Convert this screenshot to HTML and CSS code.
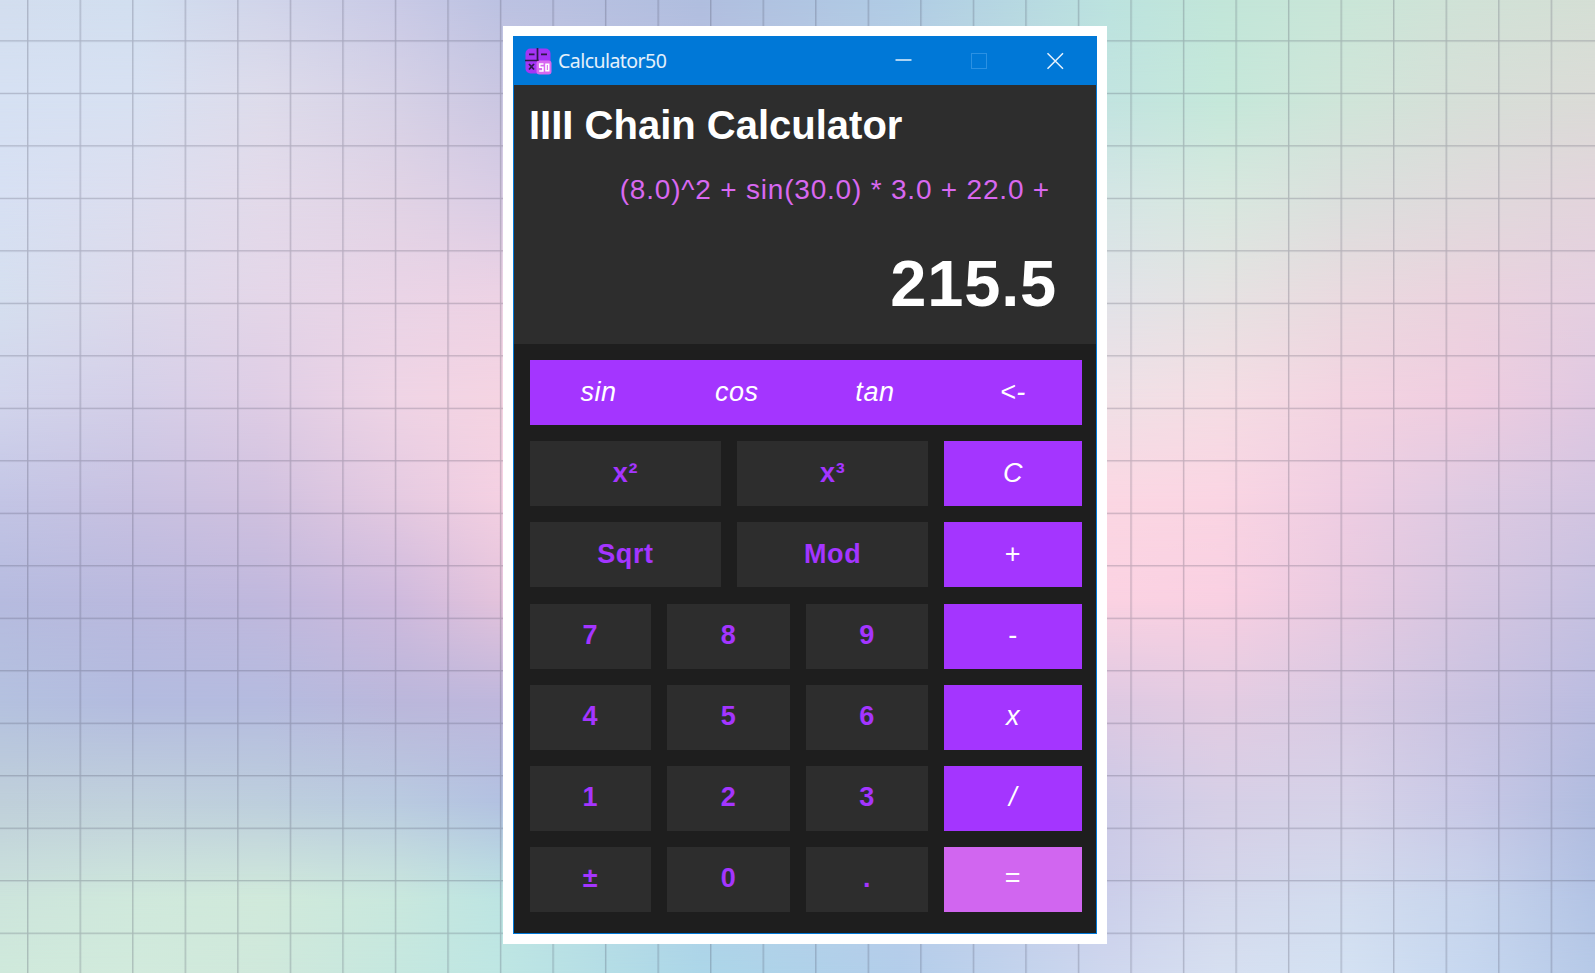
FILE: index.html
```
<!DOCTYPE html>
<html lang="en">
<head>
<meta charset="utf-8">
<title>Calculator50</title>
<link rel="stylesheet" href="styles.css">
</head>
<body>
<div class="backdrop" aria-hidden="true">
  <div class="wash wash-0"></div>
  <div class="wash wash-1"></div>
  <div class="wash wash-2"></div>
  <div class="wash wash-3"></div>
  <div class="wash wash-4"></div>
  <div class="wash wash-5"></div>
  <div class="wash wash-6"></div>
  <div class="wash wash-7"></div>
  <div class="wash wash-8"></div>
  <div class="wash wash-9"></div>
  <div class="wash wash-10"></div>
  <svg class="lines" width="1595" height="973">
    <defs>
      <pattern id="cell" x="27" y="40.3" width="52.54" height="52.49" patternUnits="userSpaceOnUse">
        <path d="M.75 0V52.49M0 .65H52.54" fill="none" stroke="#3c3c50" stroke-opacity=".27" stroke-width="1.3"/>
      </pattern>
    </defs>
    <rect width="1595" height="973" fill="url(#cell)"/>
  </svg>
</div>
<main class="frame">
  <section class="window">
    <header class="titlebar">
      <svg class="app-icon" width="27" height="27" viewBox="0 0 27 27">
        <rect x=".5" y=".5" width="25" height="25" rx="5" fill="#a435f5"/>
        <path d="M12.5 0V12.5M0 12.5H14M4 6.3H9.5M16 6.3H22" stroke="#2c1748" stroke-width="1.7" fill="none"/>
        <path d="M4 16L9 21.500M9 16L4 21.500" stroke="#2c1748" stroke-width="1.8"/>
        <rect x="11.500" y="12.500" width="15" height="14" rx="3" fill="#d868f0"/>
        <path d="M18.500 16H14.700V19.200H17.900V23H14.200M21 16.200H23.700V22.800H21Z" stroke="#fff" stroke-width="1.6" fill="none"/>
      </svg>
      <span class="app-name">Calculator50</span>
      <svg class="controls" width="170" height="18" viewBox="0 0 170 18">
        <path d="M.5 8H16.500" stroke="#e6f2fc" stroke-width="1.5"/>
        <rect x="76.500" y="1.500" width="15" height="15" fill="none" stroke="#2b91e3"/>
        <path d="M152.500 1.200L168 16.800M168 1.200L152.500 16.800" stroke="#e6f2fc" stroke-width="1.5"/>
      </svg>
    </header>
    <div class="display">
      <h1 class="heading">IIII Chain Calculator</h1>
      <div class="expression">(8.0)^2 + sin(30.0) * 3.0 + 22.0 +</div>
      <div class="result">215.5</div>
    </div>
    <div class="keypad">
      <div class="row row-trig">
        <button class="op">sin</button><button class="op">cos</button><button class="op">tan</button><button class="op">&lt;-</button>
      </div>
      <div class="row row-wide">
        <button class="key">x²</button><button class="key">x³</button><button class="op">C</button>
      </div>
      <div class="row row-wide">
        <button class="key">Sqrt</button><button class="key">Mod</button><button class="op upright">+</button>
      </div>
      <div class="row row-num">
        <button class="key">7</button><button class="key">8</button><button class="key">9</button><button class="op upright">-</button>
      </div>
      <div class="row row-num">
        <button class="key">4</button><button class="key">5</button><button class="key">6</button><button class="op">x</button>
      </div>
      <div class="row row-num">
        <button class="key">1</button><button class="key">2</button><button class="key">3</button><button class="op">/</button>
      </div>
      <div class="row row-num">
        <button class="key">±</button><button class="key">0</button><button class="key">.</button><button class="op upright equals">=</button>
      </div>
    </div>
  </section>
</main>
</body>
</html>
```
FILE: styles.css
```
* { box-sizing: border-box; }

body {
  margin: 0;
  width: 1595px;
  height: 973px;
  overflow: hidden;
  display: flex;
  justify-content: center;
  align-items: flex-start;
  padding: 26px 0 0 15px;
  font-family: "Liberation Sans", Arial, sans-serif;
}

/* Pastel mesh: each wash fades in over the one above it. */
.backdrop { position: absolute; inset: 0; overflow: hidden; z-index: -1; }
.wash {
  position: absolute;
  left: 0; right: 0; bottom: 0;
  --stops: 0px;
  background: linear-gradient(to right, var(--c0) 0, var(--c1) 133px, var(--c2) 265px, var(--c3) 400px, var(--c4) 500px, var(--c5) 700px, var(--c6) 900px, var(--c7) 1110px, var(--c8) 1220px, var(--c9) 1350px, var(--c10) 1470px, var(--c11) 1595px);
  -webkit-mask-image: linear-gradient(to bottom, transparent 0, #000 100px);
  mask-image: linear-gradient(to bottom, transparent 0, #000 100px);
}
.wash-0 { top: 0; -webkit-mask-image: none; mask-image: none;
  --c0:#d3deef; --c1:#d2dff0; --c2:#d1d5ea; --c3:#c9cae6; --c4:#bcc2e2; --c5:#b0bedf; --c6:#b0cce5; --c7:#bce3df; --c8:#c2e6d9; --c9:#cae6d8; --c10:#d1e2d7; --c11:#d5dfd5; }
.wash-1 { top: 0;
  --c0:#d6e1f3; --c1:#d8e1f2; --c2:#dedceb; --c3:#d6d1e6; --c4:#cbc7e2; --c5:#bcc2e2; --c6:#bcd0e5; --c7:#c2e4e0; --c8:#c5e8da; --c9:#d0e5d9; --c10:#d7dfd8; --c11:#dbdbd7; }
.wash-2 { top: 100px;
  --c0:#d7e0f3; --c1:#dcdeef; --c2:#e3daea; --c3:#e1d3e5; --c4:#dacde5; --c5:#d9d0e5; --c6:#d8dae5; --c7:#d5e6e5; --c8:#d8e8df; --c9:#dcdfdd; --c10:#e0dadc; --c11:#e3d4dc; }
.wash-3 { top: 200px;
  --c0:#d5dfef; --c1:#dcd9eb; --c2:#e4d6e8; --c3:#ead4e6; --c4:#edd2e4; --c5:#e8d8e5; --c6:#e5dfe6; --c7:#e2e3e8; --c8:#e6e2e2; --c9:#ead9df; --c10:#ebd2de; --c11:#e5cfe0; }
.wash-4 { top: 300px;
  --c0:#d2d5ec; --c1:#d4cfe8; --c2:#dfcde5; --c3:#efd4e5; --c4:#f5d4e2; --c5:#f4d8e4; --c6:#f2dce5; --c7:#f0e0e6; --c8:#f5dde4; --c9:#f3d3e1; --c10:#efcde0; --c11:#e0c8e1; }
.wash-5 { top: 400px;
  --c0:#c3c5e5; --c1:#c8c1e1; --c2:#d1c1df; --c3:#e5cae1; --c4:#f4d0e2; --c5:#f5d3e3; --c6:#f8d5e3; --c7:#fbd7e3; --c8:#fad5e3; --c9:#eecde2; --c10:#decae2; --c11:#d3c5e1; }
.wash-6 { top: 500px;
  --c0:#b6bbdf; --c1:#bab9de; --c2:#c0b8dd; --c3:#cfbadd; --c4:#e4c3dc; --c5:#ecc8df; --c6:#f3cde1; --c7:#fbd2e2; --c8:#f9d0e2; --c9:#e8cae1; --c10:#d6c6e1; --c11:#c6c1e1; }
.wash-7 { top: 600px;
  --c0:#b4c1df; --c1:#b3bbdf; --c2:#b5bbdf; --c3:#bbb7db; --c4:#bfb7dc; --c5:#cabddd; --c6:#d5c3df; --c7:#dfc9e2; --c8:#e4cce2; --c9:#d9cae3; --c10:#cac3e1; --c11:#bbbce0; }
.wash-8 { top: 700px;
  --c0:#bfcfda; --c1:#c0d0dc; --c2:#bdcedd; --c3:#b9cae0; --c4:#b3c1e1; --c5:#b8c4e2; --c6:#c2c7e4; --c7:#cdcae6; --c8:#d6cfe6; --c9:#d6d2e8; --c10:#c8c8e6; --c11:#b1bcdf; }
.wash-9 { top: 800px;
  --c0:#cce3dc; --c1:#cfe8dc; --c2:#d1eadb; --c3:#cae8dd; --c4:#bde4e2; --c5:#b0cfe7; --c6:#bacde9; --c7:#cbcde9; --c8:#d3d6eb; --c9:#d2dbee; --c10:#c8d4ec; --c11:#b2c2e4; }
.wash-10 { top: 873px;
  --c0:#cfe9db; --c1:#d1eadc; --c2:#cfe8db; --c3:#c5e7df; --c4:#bee6e3; --c5:#acd6e8; --c6:#b3cdea; --c7:#cfd7ee; --c8:#d6dff0; --c9:#d3e1f2; --c10:#c6d7ef; --c11:#b6c9e7; }
.lines { position: absolute; inset: 0; }

.frame {
  width: 604px;
  height: 918px;
  padding: 10px;
  background: #fff;
}
.window {
  height: 898px;
  display: flex;
  flex-direction: column;
  border: 1px solid #0078d7;
  background: #1e1e1e;
}

.titlebar {
  height: 48px;
  flex: none;
  display: flex;
  align-items: center;
  padding: 0 31px 0 11px;
  background: #0078d7;
}
.app-icon { flex: none; }
.app-name {
  margin-left: 6px;
  font: 19.5px/28px "Noto Sans", "Open Sans", sans-serif;
  letter-spacing: -.55px;
  color: #e3f0fb;
}
.controls { margin-left: auto; }

.display {
  height: 259px;
  flex: none;
  display: flex;
  flex-direction: column;
  padding: 17px 39px 0 15px;
  background: #2d2d2d;
  color: #fff;
}
.heading {
  margin: 0;
  font-size: 40px;
  line-height: 46px;
  font-weight: 700;
  white-space: nowrap;
}
.expression {
  margin-top: 26px;
  padding-right: 7px;
  text-align: right;
  font-size: 28px;
  line-height: 32px;
  letter-spacing: .8px;
  color: #d868f0;
  white-space: nowrap;
}
.result {
  margin-top: 41px;
  text-align: right;
  font-size: 65px;
  line-height: 74px;
  font-weight: 700;
  letter-spacing: .8px;
}

.keypad {
  display: flex;
  flex-direction: column;
  gap: 16.100px;
  padding: 16.300px 14px 0 15.600px;
}
.row { display: grid; height: 65px; }
.row-trig { grid-template-columns: 138px 138.400px 138px 138px; background: #a435ff; }
.row-wide { grid-template-columns: 207.700px 206.700px 138px; }
.row-num { grid-template-columns: 137.600px 138.800px 138px 138px; }

button {
  border: 0;
  padding: 0 0 1px;
  font-family: inherit;
  font-size: 27px;
  letter-spacing: .6px;
}
.key {
  margin-right: 16px;
  background: #2d2d2d;
  color: #a435ff;
  font-weight: 700;
}
.op {
  background: #a435ff;
  color: #fff;
  font-style: italic;
}
.upright { font-style: normal; }
.equals { background: #d166f0; }
```
